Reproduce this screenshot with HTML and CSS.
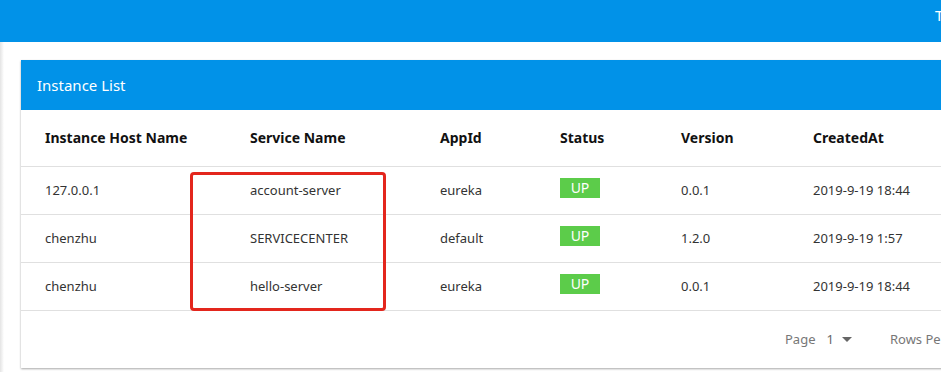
FILE: index.html
```html
<!DOCTYPE html>
<html lang="en">
<head>
  <meta charset="UTF-8" />
  <title>Instance List</title>
  <link rel="stylesheet" href="styles.css">
</head>
<body>

<div class="topbar">
  <span class="topbar-text">T</span>
</div>

<div class="layout">
  <div class="side-edge"></div>

  <div class="main">
    <div class="card">
      <div class="card-title">Instance List</div>

      <table class="instance-table">
        <colgroup>
          <col class="c-host">
          <col class="c-service">
          <col class="c-app">
          <col class="c-status">
          <col class="c-version">
          <col class="c-created">
        </colgroup>
        <thead>
          <tr>
            <th>Instance Host Name</th>
            <th>Service Name</th>
            <th>AppId</th>
            <th>Status</th>
            <th>Version</th>
            <th>CreatedAt</th>
          </tr>
        </thead>
        <tbody>
          <tr>
            <td>127.0.0.1</td>
            <td>account-server</td>
            <td>eureka</td>
            <td><span class="badge-up">UP</span></td>
            <td>0.0.1</td>
            <td>2019-9-19 18:44</td>
          </tr>
          <tr>
            <td>chenzhu</td>
            <td>SERVICECENTER</td>
            <td>default</td>
            <td><span class="badge-up">UP</span></td>
            <td>1.2.0</td>
            <td>2019-9-19 1:57</td>
          </tr>
          <tr>
            <td>chenzhu</td>
            <td>hello-server</td>
            <td>eureka</td>
            <td><span class="badge-up">UP</span></td>
            <td>0.0.1</td>
            <td>2019-9-19 18:44</td>
          </tr>
        </tbody>
      </table>

      <div class="card-footer">
        <span class="pager-label">Page</span>
        <span class="pager-value">1</span>
        <span class="pager-caret"></span>
        <span class="pager-label rows-label">Rows Per Page</span>
      </div>

      <!-- annotation box drawn over the service column -->
      <div class="highlight-box"></div>
    </div>
  </div>
</div>

</body>
</html>
```

FILE: styles.css
```css
* { box-sizing: border-box; margin: 0; padding: 0; }

body {
  font-family: "Noto Sans", "Open Sans", sans-serif;
  background: #fff;
  color: #222;
  width: 941px;
  height: 372px;
  overflow: hidden;
}

.topbar {
  height: 42px;
  background: #0192e8;
  position: relative;
}

.topbar-text {
  position: absolute;
  top: 5px;
  left: 935px;
  color: #fff;
  font-size: 15px;
}

.layout {
  display: flex;
  height: 330px;
}

.side-edge {
  width: 4px;
  flex-shrink: 0;
  background: linear-gradient(90deg, #e4e4e4, #f4f4f4 60%, #fff);
}

.main {
  padding: 18px 0 0 17px;
}

.card {
  position: relative;
  width: 1100px;
  background: #fff;
  box-shadow: 0 1px 2px rgba(0,0,0,0.35);
}

.card-title {
  height: 50px;
  background: #0192e8;
  color: #fff;
  font-size: 15px;
  line-height: 50px;
  padding-left: 16px;
}

.instance-table {
  width: 1100px;
  table-layout: fixed;
  border-collapse: collapse;
  font-size: 13px;
}

.c-host { width: 229px; }
.c-service { width: 190px; }
.c-app { width: 120px; }
.c-status { width: 121px; }
.c-version { width: 132px; }
.c-created { width: 308px; }

.instance-table th {
  height: 56px;
  text-align: left;
  font-weight: bold;
  font-size: 14px;
  color: #111;
}

.instance-table th:first-child,
.instance-table td:first-child {
  padding-left: 24px;
}

.instance-table td {
  height: 48px;
  color: #333;
  border-top: 1px solid #e0e0e0;
}

.instance-table tbody tr:last-child td {
  border-bottom: 1px solid #e0e0e0;
}

.badge-up {
  display: inline-block;
  width: 40px;
  height: 20px;
  line-height: 19px;
  background: #5ccc4a;
  color: #fff;
  text-align: center;
  font-size: 14px;
  position: relative;
  top: -2px;
}

.card-footer {
  height: 57px;
  display: flex;
  align-items: center;
  padding-left: 764px;
  font-size: 13px;
  color: #777;
}

.pager-value {
  margin-left: 11px;
  color: #666;
}

.pager-caret {
  width: 0;
  height: 0;
  margin-left: 8px;
  margin-top: 1px;
  border-left: 5px solid transparent;
  border-right: 5px solid transparent;
  border-top: 5px solid #666;
}

.rows-label {
  margin-left: 38px;
  white-space: nowrap;
}

.highlight-box {
  position: absolute;
  left: 169px;
  top: 112px;
  width: 196px;
  height: 139px;
  border: 3px solid #e3261d;
  border-radius: 4px;
}
```
